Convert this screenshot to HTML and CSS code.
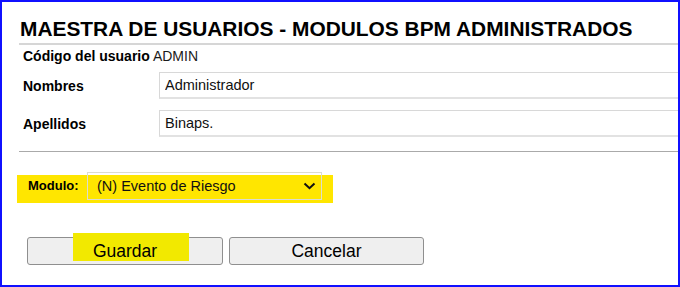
FILE: index.html
```html
<!DOCTYPE html>
<html>
    <head>
        <meta charset="UTF-8">
        <title>Maestra de usuarios</title>
        <link rel="stylesheet" href="styles.css">
    </head>
    <body>
        <div class="frame">
            <div class="page">
                <h1>MAESTRA DE USUARIOS - MODULOS BPM ADMINISTRADOS</h1>

                <div class="user">
                    <b>Código del usuario</b> ADMIN
                </div>

                <div class="row">
                    <label class="label">Nombres</label>
                    <input class="field" type="text" value="Administrador" readonly>
                </div>

                <div class="row second">
                    <label class="label">Apellidos</label>
                    <input class="field" type="text" value="Binaps." readonly>
                </div>

                <hr class="sep">

                <!-- module picker, highlighted -->
                <div class="modulo">
                    <span class="modulo-label">Modulo:</span>
                    <div class="select">
                        <span>(N) Evento de Riesgo</span>
                        <svg class="chev" width="13" height="8" viewBox="0 0 13 8">
                            <path d="M1.5 1.5 L6.5 6.2 L11.5 1.5" fill="none" stroke="#111" stroke-width="2"/>
                        </svg>
                    </div>
                </div>

                <div class="buttons">
                    <button class="btn save">Guardar</button>
                    <button class="btn">Cancelar</button>
                </div>
            </div>
        </div>
    </body>
</html>
```

FILE: styles.css
```css
* {
    box-sizing: border-box;
}

body {
    margin: 0;
    background-color: #fff;
    color: #000;
    font-family: "Liberation Sans", Arial, sans-serif;
}

.frame {
    width: 680px;
    height: 287px;
    border: 2px solid #1010ff;
    overflow: hidden;
}

.page {
    padding-top: 15px;
    padding-left: 17px;
}

h1 {
    margin: 0;
    padding-left: 1px;
    padding-bottom: 2px;
    font-size: 20.9px;
    line-height: 24px;
    font-weight: bold;
    white-space: nowrap;
    border-bottom: 2px solid #d6d6d6;
}

.user {
    margin-top: 1px;
    padding-left: 4px;
    font-size: 14px;
    line-height: 20px;
    color: #1a1a1a;
}

.user b {
    color: #000;
}

.row {
    display: flex;
    align-items: center;
    margin-top: 6px;
    padding-left: 4px;
}

.row.second {
    margin-top: 11px;
}

.label {
    flex-shrink: 0;
    width: 136px;
    font-size: 14px;
    font-weight: bold;
}

.field {
    flex-shrink: 0;
    width: 600px;
    height: 27px;
    margin: 0;
    padding: 0 0 0 5px;
    border: 1px solid #d8d8d8;
    border-bottom: 2px solid #e2e2e2;
    background: #fff;
    font-family: "Liberation Sans", Arial, sans-serif;
    font-size: 14.5px;
    color: #111;
    outline: none;
}

.sep {
    margin: 14px 0 0 0;
    border: none;
    border-top: 1px solid #aaaaaa;
}

.modulo {
    display: flex;
    align-items: flex-start;
    width: 316px;
    height: 31px;
    margin-top: 20px;
    margin-left: -2px;
    padding-left: 11px;
    background: linear-gradient(to bottom, transparent 3px, #ffe600 3px);
}

.modulo-label {
    flex-shrink: 0;
    width: 59px;
    font-size: 13px;
    font-weight: bold;
    line-height: 27px;
}

.select {
    display: flex;
    align-items: center;
    justify-content: space-between;
    width: 235px;
    height: 28px;
    padding: 0 5px 0 9px;
    border: 1px solid #dcdcd0;
    font-size: 14.5px;
    color: #111;
}

.chev {
    display: block;
}

.buttons {
    display: flex;
    gap: 6px;
    margin-top: 34px;
    padding-left: 8px;
}

.btn {
    width: 196px;
    height: 28px;
    padding: 0;
    border: 1px solid #8f8f8f;
    border-radius: 3px;
    background-color: #efefef;
    font-family: "Liberation Sans", Arial, sans-serif;
    font-size: 17.5px;
    color: #000;
}

.btn + .btn {
    width: 195px;
}

/* yellow marker over the Guardar label */
.save {
    position: relative;
    isolation: isolate;
}

.save:before {
    content: "";
    position: absolute;
    left: 45px;
    top: -5px;
    width: 116px;
    height: 28px;
    background-color: #f2e900;
    z-index: -1;
}
```
